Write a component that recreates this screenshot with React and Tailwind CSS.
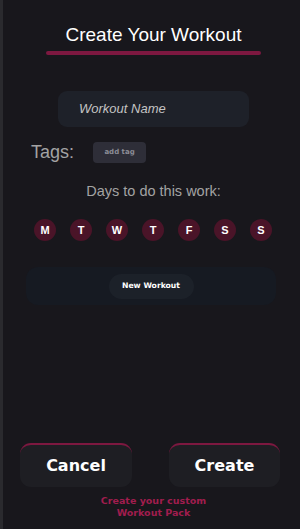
import React, { useState } from "react";

const DAYS = ["M", "T", "W", "T", "F", "S", "S"];

export default function App() {
  const [name, setName] = useState("");

  return (
    <div className="min-h-screen h-[529px] bg-[#18171c] border-l-[3px] border-[#2a2a2e] flex flex-col font-['Liberation_Sans',Arial,sans-serif] text-white overflow-hidden">
      {/* HEADER */}
      <div className="pt-[24px] pl-[4px] flex flex-col items-center">
        <h1 className="text-[19px] leading-[22px] text-white">Create Your Workout</h1>
        <div className="mt-[5px] w-[215px] h-[4px] rounded-full bg-[#7d1840]"></div>
      </div>

      {/* NAME */}
      <div className="mt-[36px] ml-[55px] w-[191px] h-[36px] rounded-[9px] bg-[#1e2129] flex items-center px-[21px]">
        <input
          value={name}
          onChange={(e) => setName(e.target.value)}
          placeholder="Workout Name"
          className="w-full bg-transparent outline-none italic text-[13px] text-[#c8c8c8] placeholder:text-[#c4c4c4]"
        />
      </div>

      {/* TAGS */}
      <div className="mt-[15px] ml-[28px] flex items-center h-[21px]">
        <span className="text-[18px] text-[#a3a3a3]">Tags:</span>
        <button className="ml-[19px] h-[21px] w-[53px] rounded-[4px] bg-[#2e2e38] text-[7px] font-bold font-['DejaVu_Sans',sans-serif] text-[#8c8c96]">
          add tag
        </button>
      </div>

      {/* DAYS */}
      <div className="mt-[20px] pl-[4px] text-center text-[14.5px] leading-[17px] text-[#a3a3a3]">
        Days to do this work:
      </div>
      <div className="mt-[19px] ml-[31px] flex gap-[14px]">
        {DAYS.map((d, i) => (
          <div
            key={i}
            className="w-[22px] h-[22px] rounded-full bg-[#4a1428] flex items-center justify-center text-[11px] font-bold text-white"
          >
            {d}
          </div>
        ))}
      </div>

      {/* WORKOUT LIST */}
      <div className="mt-[26px] ml-[23px] w-[250px] h-[38px] rounded-[12px] bg-[#161a22] flex items-center justify-center">
        <button className="w-[85px] h-[25px] rounded-full bg-[#1c2129] text-[7.7px] font-bold font-['DejaVu_Sans',sans-serif] text-white">
          New Workout
        </button>
      </div>

      {/* FOOTER */}
      <div className="mt-auto pb-[10px]">
        <div className="ml-[17px] flex gap-[37px]">
          <button className="w-[112px] h-[44px] rounded-[11px] border-t-2 border-[#7d1840] bg-[#1e1e23] text-[16px] font-bold font-['DejaVu_Sans',sans-serif] text-white">
            Cancel
          </button>
          <button className="w-[111px] h-[44px] rounded-[11px] border-t-2 border-[#7d1840] bg-[#1e1e23] text-[16px] font-bold font-['DejaVu_Sans',sans-serif] text-white">
            Create
          </button>
        </div>
        <div className="mt-[8px] pl-[4px] text-center text-[9.5px] leading-[12px] font-bold font-['DejaVu_Sans',sans-serif] text-[#a11d4e]">
          Create your custom
          <br />
          Workout Pack
        </div>
      </div>
    </div>
  );
}
